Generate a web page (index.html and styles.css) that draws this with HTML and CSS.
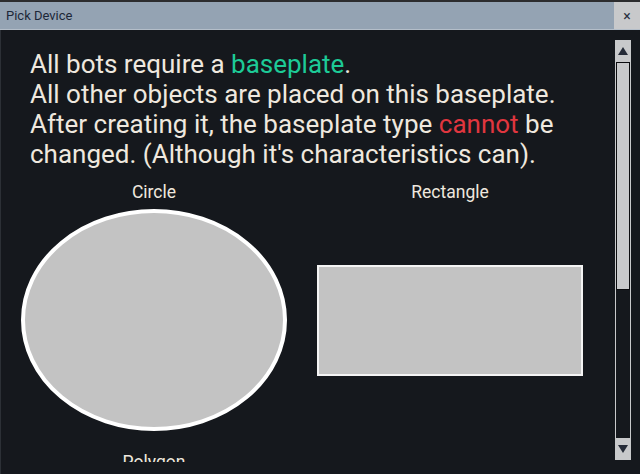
FILE: index.html
```html
<!DOCTYPE html>
<html>
<head>
<meta charset="utf-8">
<link rel="stylesheet" href="styles.css">
</head>
<body>
<div class="window">
  <div class="topstrip"></div>
  <div class="titlebar">
    <span class="title">Pick Device</span>
    <span class="close">×</span>
  </div>
  <div class="content">
    <div class="scrollarea">
      <p class="intro">All bots require a <span class="green">baseplate</span>.<br>All other objects are placed on this baseplate.<br>After creating it, the baseplate type <span class="red">cannot</span> be<br>changed. (Although it's characteristics can).</p>
      <div class="grid">
        <div class="item">
          <div class="label">Circle</div>
          <div class="shapebox">
            <svg class="ellipse" width="266" height="222" viewBox="0 0 266 222"><ellipse cx="133" cy="111" rx="131" ry="109" fill="#c3c3c3" stroke="#ffffff" stroke-width="4"/></svg>
          </div>
        </div>
        <div class="item">
          <div class="label">Rectangle</div>
          <div class="shapebox">
            <div class="rect"></div>
          </div>
        </div>
        <div class="item">
          <div class="label">Polygon</div>
          <div class="shapebox"></div>
        </div>
      </div>
    </div>
    <div class="scrollbar">
      <div class="sbtn"><svg width="10" height="8" viewBox="0 0 10 8"><polygon points="5,0 10,8 0,8" fill="#252b38"/></svg></div>
      <div class="track"><div class="thumb"></div></div>
      <div class="sbtn"><svg width="10" height="8" viewBox="0 0 10 8"><polygon points="0,0 10,0 5,8" fill="#252b38"/></svg></div>
    </div>
  </div>
</div>
</body>
</html>
```
FILE: styles.css
```css
html, body {
  margin: 0;
  padding: 0;
  background: #15181d;
  overflow: hidden;
}
.window {
  width: 640px;
  height: 474px;
  display: flex;
  flex-direction: column;
  font-family: Roboto, "Liberation Sans", sans-serif;
}
.topstrip {
  height: 2px;
  background: #2c2c2e;
}
.titlebar {
  height: 27px;
  background: #94a3b3;
  border-bottom: 1px solid #b4bec9;
  display: flex;
  align-items: center;
  justify-content: space-between;
}
.title {
  padding-left: 6px;
  font-size: 13px;
  color: #1d2838;
}
.close {
  width: 26px;
  height: 27px;
  background: #c8c9cb;
  color: #2a3040;
  font-size: 14px;
  display: flex;
  align-items: center;
  justify-content: center;
}
.content {
  flex: 1;
  display: flex;
  border-left: 1px solid #2c3036;
  min-height: 0;
}
.scrollarea {
  width: 614px;
  height: 432px;
  overflow: hidden;
  flex-shrink: 0;
}
.intro {
  margin: 19px 0 0 29px;
  font-size: 26px;
  line-height: 30px;
  color: #efe8df;
}
.green { color: #1dcb97; }
.red { color: #e1363f; }
.grid {
  display: grid;
  grid-template-columns: 296px 296px;
  row-gap: 20px;
  padding-left: 5px;
  margin-top: 12px;
}
.item {
  display: flex;
  flex-direction: column;
  align-items: center;
}
.label {
  font-size: 17.5px;
  line-height: 22px;
  color: #efe8df;
  margin-bottom: 6px;
}
.shapebox {
  width: 266px;
  height: 222px;
  display: flex;
  align-items: center;
  justify-content: center;
}
.ellipse { display: block; }
.rect {
  width: 262px;
  height: 107px;
  background: #c3c3c3;
  border: 2px solid #f4f4f4;
}
.scrollbar {
  margin-top: 10px;
  width: 16px;
  height: 420px;
  display: flex;
  flex-direction: column;
}
.sbtn {
  height: 22px;
  background: #c8c9cb;
  display: flex;
  align-items: center;
  justify-content: center;
  flex-shrink: 0;
}
.track {
  flex: 1;
  border-left: 1px solid #c8c9cb;
  border-right: 1px solid #c8c9cb;
}
.thumb {
  height: 226px;
  background: #c8c9cb;
  border: 1px solid #0c0d10;
}
```
